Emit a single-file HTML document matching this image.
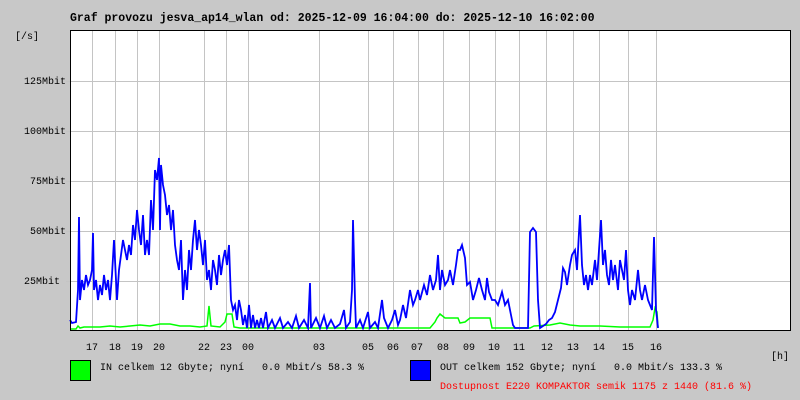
<!DOCTYPE html>
<html><head><meta charset="utf-8"><style>
html,body{margin:0;padding:0;}
body{width:800px;height:400px;background:#c8c8c8;position:relative;overflow:hidden;font-family:"Liberation Mono",monospace;font-size:10px;color:#000;}
.t{position:absolute;white-space:pre;}
</style></head><body>
<div class="t" style="left:70px;top:12px;font-size:11.5px;font-weight:bold;">Graf provozu jesva_ap14_wlan od: 2025-12-09 16:04:00 do: 2025-12-10 16:02:00</div>
<svg width="800" height="400" style="position:absolute;left:0;top:0">
<rect x="70.5" y="30.5" width="720" height="300" fill="#fff"/>
<g stroke="#c4c4c4" stroke-width="1">
<line x1="66" y1="81.5" x2="790" y2="81.5"/><line x1="66" y1="131.5" x2="790" y2="131.5"/><line x1="66" y1="181.5" x2="790" y2="181.5"/><line x1="66" y1="231.5" x2="790" y2="231.5"/><line x1="66" y1="281.5" x2="790" y2="281.5"/>
<line x1="92.5" y1="30" x2="92.5" y2="330"/><line x1="115.5" y1="30" x2="115.5" y2="330"/><line x1="137.5" y1="30" x2="137.5" y2="330"/><line x1="159.5" y1="30" x2="159.5" y2="330"/><line x1="204.5" y1="30" x2="204.5" y2="330"/><line x1="226.5" y1="30" x2="226.5" y2="330"/><line x1="248.5" y1="30" x2="248.5" y2="330"/><line x1="319.5" y1="30" x2="319.5" y2="330"/><line x1="368.5" y1="30" x2="368.5" y2="330"/><line x1="393.5" y1="30" x2="393.5" y2="330"/><line x1="418.5" y1="30" x2="418.5" y2="330"/><line x1="443.5" y1="30" x2="443.5" y2="330"/><line x1="469.5" y1="30" x2="469.5" y2="330"/><line x1="495.5" y1="30" x2="495.5" y2="330"/><line x1="519.5" y1="30" x2="519.5" y2="330"/><line x1="546.5" y1="30" x2="546.5" y2="330"/><line x1="573.5" y1="30" x2="573.5" y2="330"/><line x1="599.5" y1="30" x2="599.5" y2="330"/><line x1="628.5" y1="30" x2="628.5" y2="330"/><line x1="656.5" y1="30" x2="656.5" y2="330"/>
</g>
<polyline fill="none" stroke="#00ff00" stroke-width="1.5" points="70,329 76,329 78,326 80,328 84,327 100,327 110,326 120,327 130,326 140,325 150,326 160,324 170,324 180,326 190,326 200,327 207,326 209,306 211,326 220,327 225,322 227,314 232,314 234,327 240,328 300,328 340,328 360,328 390,328 430,328 435,322 437,318 440,314 445,318 450,318 458,318 460,323 465,322 470,318 490,318 492,328 530,328 534,326 550,325 560,323 570,325 580,326 600,326 620,327 640,327 650,327 653,320 655,308 657,312 658,328"/>
<polyline fill="none" stroke="#0000ff" stroke-width="1.8" points="70,320 72,323 76,322 78,290 79,217 80,300 82,280 84,290 86,275 88,285 90,280 92,270 93,233 94,290 96,280 98,300 100,285 102,295 104,275 106,290 108,280 110,300 112,275 114,240 115,260 117,300 119,270 121,255 123,240 125,250 127,260 129,245 131,255 133,225 135,240 137,210 139,230 141,245 143,215 145,255 147,240 149,255 151,200 153,230 155,170 157,180 159,158 160,230 161,165 163,185 165,195 167,215 169,205 171,230 173,210 175,245 177,260 179,270 181,240 183,300 185,270 187,290 189,250 191,270 193,240 195,220 197,250 199,230 201,245 203,265 205,240 207,280 209,270 211,290 213,260 215,270 217,285 219,255 221,275 223,260 225,250 227,265 229,245 231,300 233,310 235,305 237,320 239,300 241,310 243,325 245,315 247,328 249,305 251,328 253,315 255,328 257,320 259,328 261,318 263,328 266,312 268,328 272,320 275,328 280,318 283,328 288,322 292,328 296,316 299,328 304,320 308,328 310,283 311,328 316,318 320,328 324,316 327,328 331,320 335,328 340,324 344,310 346,328 350,322 352,290 353,220 355,300 356,328 360,320 363,328 368,312 370,328 375,322 378,328 382,300 384,318 388,328 392,320 395,310 398,325 400,320 403,305 406,318 410,290 413,305 415,300 418,290 420,300 424,285 427,295 430,275 433,290 436,280 438,255 440,290 442,270 445,285 448,280 450,270 453,285 456,265 458,250 460,250 462,245 465,258 467,285 470,282 473,300 476,290 479,278 482,290 485,300 487,278 489,292 492,300 495,300 498,305 502,292 505,305 508,300 511,315 513,325 515,328 528,328 530,232 533,228 536,232 538,300 540,328 543,326 546,324 549,320 552,318 555,312 558,300 561,288 563,268 565,272 567,285 570,265 572,255 575,250 577,270 579,232 580,215 582,265 584,285 586,275 588,290 590,275 592,285 595,260 597,280 599,250 601,220 603,265 605,250 607,275 609,285 611,260 613,280 615,265 618,290 620,260 622,270 624,280 626,250 628,290 630,305 632,290 635,300 638,270 640,290 642,300 645,285 648,300 650,305 652,310 654,237 656,310 657,318 658,328"/>
<path d="M70.5 30.5H790.5V330.5H70.5Z" fill="none" stroke="#000" stroke-width="1"/>
<rect x="70.5" y="360.5" width="20" height="20" fill="#00ff00" stroke="#000"/>
<rect x="410.5" y="360.5" width="20" height="20" fill="#0000ff" stroke="#000"/>
</svg>
<div class="t" style="left:15px;top:32px;">[/s]</div>
<div class="t" style="left:24px;top:77px;">125Mbit</div>
<div class="t" style="left:24px;top:127px;">100Mbit</div>
<div class="t" style="left:30px;top:177px;">75Mbit</div>
<div class="t" style="left:30px;top:227px;">50Mbit</div>
<div class="t" style="left:24px;top:277px;">25Mbit</div>
<div class="t" style="left:86px;top:343px;">17</div>
<div class="t" style="left:109px;top:343px;">18</div>
<div class="t" style="left:131px;top:343px;">19</div>
<div class="t" style="left:153px;top:343px;">20</div>
<div class="t" style="left:198px;top:343px;">22</div>
<div class="t" style="left:220px;top:343px;">23</div>
<div class="t" style="left:242px;top:343px;">00</div>
<div class="t" style="left:313px;top:343px;">03</div>
<div class="t" style="left:362px;top:343px;">05</div>
<div class="t" style="left:387px;top:343px;">06</div>
<div class="t" style="left:411px;top:343px;">07</div>
<div class="t" style="left:437px;top:343px;">08</div>
<div class="t" style="left:463px;top:343px;">09</div>
<div class="t" style="left:488px;top:343px;">10</div>
<div class="t" style="left:513px;top:343px;">11</div>
<div class="t" style="left:541px;top:343px;">12</div>
<div class="t" style="left:567px;top:343px;">13</div>
<div class="t" style="left:593px;top:343px;">14</div>
<div class="t" style="left:622px;top:343px;">15</div>
<div class="t" style="left:650px;top:343px;">16</div>
<div class="t" style="left:771px;top:352px;">[h]</div>
<div class="t" style="left:100px;top:363px;">IN celkem 12 Gbyte; nyní   0.0 Mbit/s 58.3 %</div>
<div class="t" style="left:440px;top:363px;">OUT celkem 152 Gbyte; nyní   0.0 Mbit/s 133.3 %</div>
<div class="t" style="left:440px;top:382px;color:#ff0000;">Dostupnost E220 KOMPAKTOR semik 1175 z 1440 (81.6 %)</div>
</body></html>
